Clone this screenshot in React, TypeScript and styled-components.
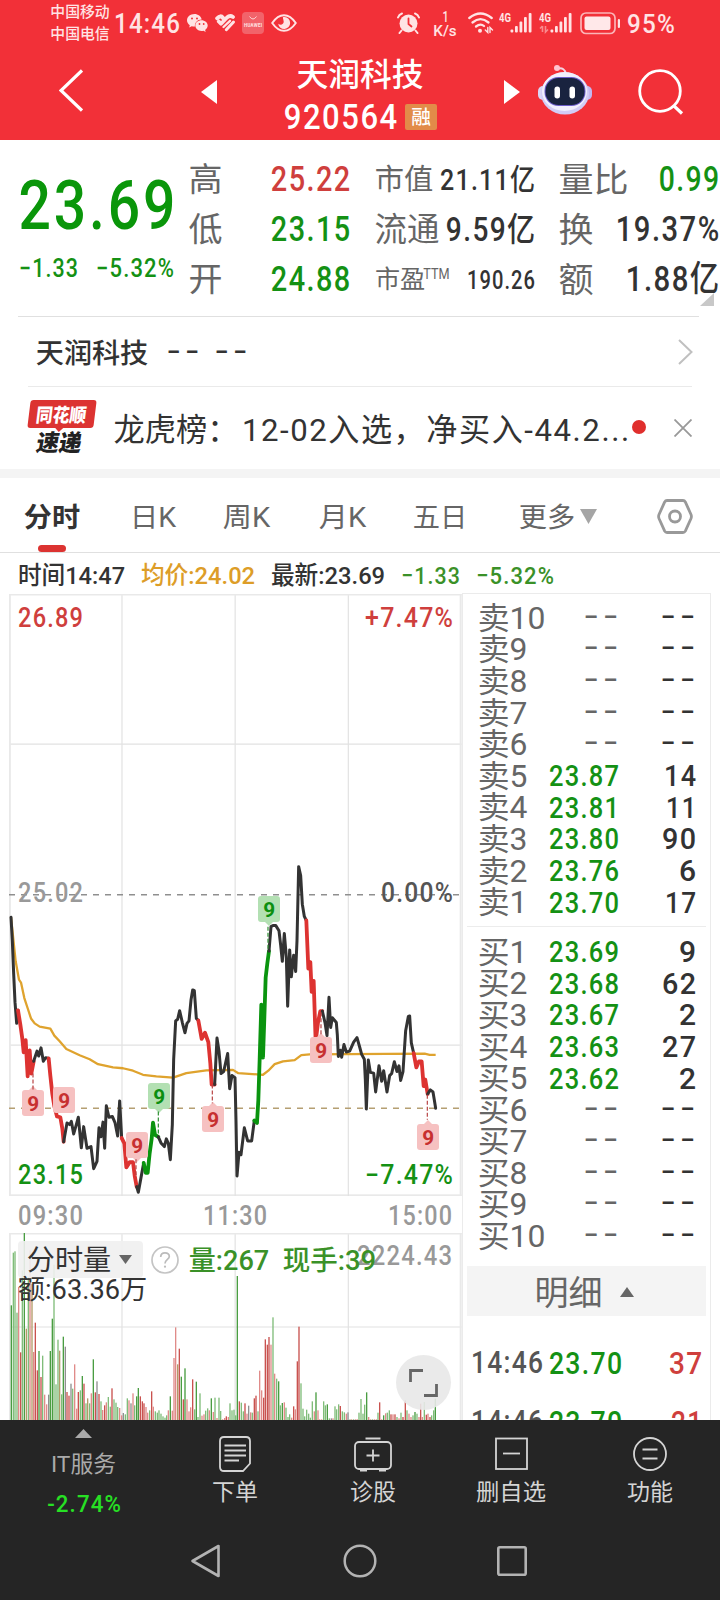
import React, { useLayoutEffect, useRef, useState } from "react";
import styled, { createGlobalStyle } from "styled-components";

const GlobalStyle = createGlobalStyle`
  * { box-sizing: border-box; }
  body { margin: 0; background: #fff; }
  svg { display: block; flex: none; }
`;

const RED = "#cf3f3d";
const GREEN = "#149114";
const INK = "#333";
const GREY = "#666";

/* ---------- text fitted to a fixed width ---------- */

const FitBox = styled.span<{ $w: number; $size: number; $weight: number; $color: string; $ls: number }>`
  display: block;
  flex: none;
  width: ${(p) => p.$w}px;
  height: ${(p) => Math.round(p.$size * 1.2)}px;
  line-height: ${(p) => Math.round(p.$size * 1.2)}px;
  font-family: Roboto, "Noto Sans CJK SC", sans-serif;
  font-size: ${(p) => p.$size}px;
  font-weight: ${(p) => p.$weight};
  letter-spacing: ${(p) => p.$ls}px;
  color: ${(p) => p.$color};
  white-space: nowrap;
`;

const FitInner = styled.span`
  display: inline-block;
  transform-origin: 0 50%;
  vertical-align: top;
`;

type FitProps = { w: number; size: number; weight?: number; color?: string; children: string };

function Fit({ w, size, weight = 400, color = INK, children }: FitProps) {
  const ref = useRef<HTMLSpanElement>(null);
  const [natural, setNatural] = useState(0);
  const numeric = /^[\d.+−-]/.test(children);
  const spacing = children === "--" ? size * 0.12 : numeric ? size * 0.05 : 0;
  useLayoutEffect(() => {
    const el = ref.current;
    if (el && !natural) setNatural(el.getBoundingClientRect().width - spacing);
  }, [natural, spacing]);
  const bearing = size * (numeric ? 0.035 : 0.045);
  const scale = natural ? (w + bearing * 2) / natural : 1;
  return (
    <FitBox $w={w} $size={size} $weight={weight} $color={color} $ls={spacing}>
      <FitInner ref={ref} style={natural ? { transform: `translate(${-bearing}px, 1px) scaleX(${scale})` } : undefined}>
        {children}
      </FitInner>
    </FitBox>
  );
}

/* ---------- header ---------- */

const Page = styled.div`
  width: 720px;
  height: 1600px;
  display: flex;
  flex-direction: column;
  overflow: hidden;
  background: #fff;
`;

const Header = styled.header`
  height: 140px;
  flex: none;
  background: #f23038;
`;

const StatusBar = styled.div`
  height: 46px;
  display: flex;
  align-items: center;
`;

const Slot = styled.div<{ $ml: number }>`
  margin-left: ${(p) => p.$ml}px;
  flex: none;
`;

const Carriers = styled.div`
  margin-left: 51px;
  height: 46px;
  display: flex;
  flex-direction: column;
  padding-top: 2px;
  gap: 4px;
`;

const Speed = styled.div`
  margin-left: 14px;
  display: flex;
  flex-direction: column;
  align-items: center;
  gap: 0;
  span + span { margin-top: -4px; }
`;

const NavBar = styled.div`
  height: 94px;
  display: flex;
  align-items: flex-start;
`;

const NavIcon = styled.div<{ $ml: number; $mt: number }>`
  margin-left: ${(p) => p.$ml}px;
  margin-top: ${(p) => p.$mt}px;
  flex: none;
`;

const TitleBlock = styled.div`
  margin-left: 68px;
  width: 153px;
  padding-top: 8px;
  flex: none;
`;

const TitleLine = styled.div`
  height: 42px;
  display: flex;
  align-items: center;
  padding-left: 13px;
`;

const CodeLine = styled(TitleLine)`
  padding-left: 0;
  gap: 9px;
  height: 41px;
`;

const MarginBadge = styled.span`
  width: 32px;
  height: 26px;
  border-radius: 2px;
  background: #e28b49;
  display: flex;
  align-items: center;
  justify-content: center;
`;

function WechatIcon() {
  return (
    <svg width="21" height="19" viewBox="0 0 21 19" fill="#ffe3e4">
      <path d="M7.500 0C3.300 0 0 2.800 0 6.300c0 2 1.100 3.700 2.800 4.900L2.200 13.500l2.500-1.300c.9.2 1.800.4 2.800.4h.5C7.300 8.600 10.400 5.500 14.700 5.400 14 2.300 11 0 7.500 0z" />
      <path d="M14.500 6.200c-3.500 0-6.200 2.400-6.200 5.400s2.700 5.400 6.200 5.400c.7 0 1.400-.1 2-.3l2.200 1.200-.6-1.900c1.500-1 2.600-2.600 2.600-4.400 0-3-2.800-5.400-6.200-5.400z" />
      <g fill="#f23038">
        <circle cx="5" cy="4.500" r="1" />
        <circle cx="10" cy="4.500" r="1" />
        <circle cx="12.500" cy="10" r=".9" />
        <circle cx="16.700" cy="10" r=".9" />
      </g>
    </svg>
  );
}

function HealthIcon() {
  return (
    <svg width="21" height="18" viewBox="0 0 21 18" fill="none" stroke="#ffe3e4" strokeWidth="4" strokeLinecap="round">
      <path d="M2.300 4.300Q5.500.8 8 4" strokeWidth="4.200" />
      <path d="M3.800 7.500 6 9.700 12 3.500Q15 .8 18 3" strokeWidth="3.800" strokeLinejoin="round" />
      <path d="M8.500 13 15 6.800" strokeWidth="2.300" />
      <path d="M11.300 15.700 18.500 8" strokeWidth="3" />
    </svg>
  );
}

function StoreIcon() {
  return (
    <svg width="22" height="22" viewBox="0 0 22 22">
      <rect width="22" height="22" rx="4" fill="#f2636a" />
      <path d="M7.500 4.500q3.500 5 7 0" fill="none" stroke="#ffd5d6" strokeWidth="1" />
      <text x="11" y="14.500" textAnchor="middle" fontSize="4.500" fontWeight="700" fontFamily="Roboto" fill="#ffe3e4" textLength="18">HUAWEI</text>
    </svg>
  );
}

function EyeIcon() {
  return (
    <svg width="26" height="18" viewBox="0 0 26 18">
      <path d="M1.200 9Q6.500 1.200 13 1.200T24.800 9Q19.500 16.800 13 16.800T1.200 9z" fill="none" stroke="#ffe3e4" strokeWidth="1.900" />
      <path d="M13.500 3a6 6 0 1 1-6.300 6.800c2.500 1.800 5.500.6 5.500-2 0-1.600-.8-3-.8-4.600.5-.2 1-.2 1.600-.2z" fill="#ffe3e4" />
    </svg>
  );
}

function AlarmIcon() {
  return (
    <svg width="23" height="22" viewBox="0 0 23 22">
      <circle cx="11.500" cy="11.500" r="9" fill="#ffe3e4" />
      <path d="M11.500 6.500v5.500l3 2.500" fill="none" stroke="#f23038" strokeWidth="1.800" strokeLinecap="round" />
      <path d="M1 5.500Q2 2.500 5 1.500M22 5.500Q21 2.500 18 1.500M4.500 18.500 2.500 21M18.500 18.500l2 2.500" stroke="#ffe3e4" strokeWidth="2" fill="none" strokeLinecap="round" />
    </svg>
  );
}

function WifiIcon() {
  return (
    <svg width="26" height="22" viewBox="0 0 26 22" fill="none" stroke="#ffe3e4" strokeWidth="2.300" strokeLinecap="round">
      <path d="M1.300 6Q12.500-3 23.700 6" />
      <path d="M4.500 10.500Q12.500 3.700 20.500 10.500" />
      <path d="M8 14.500Q12.500 11 16 14" />
      <circle cx="12" cy="18.700" r="2" fill="#ffe3e4" stroke="none" />
      <path d="M19.800 15.500v5l-2.500-2.500M22 20.500v-5l2.500 2.500" strokeWidth="1.400" />
    </svg>
  );
}

function SignalIcon({ data }: { data?: boolean }) {
  return (
    <svg width="34" height="22" viewBox="0 0 34 22" fill="#ffe3e4">
      <text x="0" y="9.500" fontSize="12" fontWeight="700" fontFamily="Roboto" textLength="12" lengthAdjust="spacingAndGlyphs">4G</text>
      {data && <path d="M3.500 14v6M1 16.500 3.500 14M6.500 14v6L9 17.500" stroke="#f98a8e" strokeWidth="1.600" fill="none" />}
      <rect x="11.500" y="17.500" width="2.800" height="3" rx="1" />
      <rect x="16" y="14" width="2.800" height="6.500" rx="1" />
      <rect x="20.500" y="9.500" width="2.800" height="11" rx="1" />
      <rect x="25" y="5" width="2.800" height="15.500" rx="1" />
      <rect x="29.700" y="1" width="2.800" height="19.500" rx="1" />
    </svg>
  );
}

function BatteryIcon() {
  return (
    <svg width="41" height="23" viewBox="0 0 41 23">
      <rect x="1" y="1" width="34" height="20.500" rx="5" fill="none" stroke="#fbb4b7" strokeWidth="1.700" />
      <rect x="4.500" y="4.500" width="26" height="13.500" rx="2" fill="#ffe8e9" />
      <rect x="37.800" y="7" width="2.200" height="9" rx="1.100" fill="#ffe3e4" />
    </svg>
  );
}

function RobotIcon() {
  return (
    <svg width="54" height="52" viewBox="0 0 54 52">
      <path d="M20 4.500q7-1 7.500 5" stroke="#f3d3e0" strokeWidth="2" fill="none" />
      <circle cx="19" cy="4" r="3" fill="#ffc4d0" />
      <rect x="0" y="22" width="10" height="14" rx="5" fill="#d9d6f7" />
      <rect x="44" y="22" width="10" height="14" rx="5" fill="#c3b7ef" />
      <ellipse cx="27" cy="29.500" rx="24" ry="21" fill="#d2ccf6" />
      <ellipse cx="26.500" cy="27.500" rx="22.500" ry="19.500" fill="#f1effd" />
      <rect x="6.500" y="13" width="41" height="29" rx="14" fill="#6b5cc9" />
      <rect x="7.500" y="14" width="39" height="27" rx="13" fill="#19233f" />
      <rect x="16.500" y="22.500" width="5.500" height="12" rx="2.700" fill="#fff" />
      <rect x="31.500" y="22.500" width="5.500" height="12" rx="2.700" fill="#fff" />
    </svg>
  );
}

function TopHeader() {
  const pale = "#ffe3e4";
  return (
    <Header>
      <StatusBar>
        <Carriers>
          <Fit w={58} size={15} weight={500} color={pale}>中国移动</Fit>
          <Fit w={58} size={15} weight={500} color={pale}>中国电信</Fit>
        </Carriers>
        <Slot $ml={6}><Fit w={64} size={27} weight={500} color={pale}>14:46</Fit></Slot>
        <Slot $ml={8}><WechatIcon /></Slot>
        <Slot $ml={7}><HealthIcon /></Slot>
        <Slot $ml={6}><StoreIcon /></Slot>
        <Slot $ml={7}><EyeIcon /></Slot>
        <Slot $ml={100}><AlarmIcon /></Slot>
        <Speed>
          <Fit w={5} size={15} weight={500} color={pale}>1</Fit>
          <Fit w={22} size={15} weight={500} color={pale}>K/s</Fit>
        </Speed>
        <Slot $ml={12}><WifiIcon /></Slot>
        <Slot $ml={5}><SignalIcon /></Slot>
        <Slot $ml={6}><SignalIcon data /></Slot>
        <Slot $ml={7}><BatteryIcon /></Slot>
        <Slot $ml={7}><Fit w={46} size={26} weight={500} color={pale}>95%</Fit></Slot>
      </StatusBar>
      <NavBar>
        <NavIcon $ml={59} $mt={23}>
          <svg width="24" height="43" viewBox="0 0 24 43"><path d="M23 1.500 2 21.500 23 41.500" fill="none" stroke="#fff" strokeWidth="3.200" /></svg>
        </NavIcon>
        <NavIcon $ml={118} $mt={34}>
          <svg width="16" height="24" viewBox="0 0 16 24"><path d="M16 0v24L0 12z" fill="#fff" /></svg>
        </NavIcon>
        <TitleBlock>
          <TitleLine><Fit w={124} size={31.500} weight={500} color="#fff">天润科技</Fit></TitleLine>
          <CodeLine>
            <Fit w={111} size={35} weight={500} color="#fff">920564</Fit>
            <MarginBadge><Fit w={18} size={19} weight={500} color="#fff">融</Fit></MarginBadge>
          </CodeLine>
        </TitleBlock>
        <NavIcon $ml={66} $mt={34}>
          <svg width="16" height="24" viewBox="0 0 16 24"><path d="M0 0v24l16-12z" fill="#fff" /></svg>
        </NavIcon>
        <NavIcon $ml={18} $mt={18}><RobotIcon /></NavIcon>
        <NavIcon $ml={46} $mt={23}>
          <svg width="46" height="46" viewBox="0 0 46 46" fill="none" stroke="#fff" strokeWidth="2.800"><circle cx="22" cy="22" r="20.300" /><path d="M35.500 36.500 44 44.500" strokeWidth="3.200" /></svg>
        </NavIcon>
      </NavBar>
    </Header>
  );
}

/* ---------- quote summary ---------- */

const Quote = styled.section`
  height: 176px;
  flex: none;
  display: flex;
  padding-top: 14px;
  position: relative;
`;

const PriceBlock = styled.div`
  width: 190px;
  padding: 9px 0 0 21px;
  flex: none;
`;

const ChangeLine = styled.div`
  display: flex;
  gap: 20px;
  margin-top: 6px;
  margin-left: -1px;
`;

const StatColumn = styled.div<{ $w: number; $mr: number }>`
  width: ${(p) => p.$w}px;
  margin-right: ${(p) => p.$mr}px;
  flex: none;
`;

const StatRow = styled.div`
  height: 50px;
  display: flex;
  align-items: center;
  justify-content: space-between;
`;

const PeLabel = styled.div`
  display: flex;
  align-items: flex-start;
`;

const Corner = styled.svg`
  position: absolute;
  left: 700px;
  top: 153px;
`;

const Divider = styled.div<{ $l: number; $r: number; $c?: string }>`
  height: 1px;
  flex: none;
  margin: 0 ${(p) => p.$r}px 0 ${(p) => p.$l}px;
  background: ${(p) => p.$c || "#e0e0e0"};
`;

function QuoteSummary() {
  return (
    <Quote>
      <PriceBlock>
        <Fit w={152} size={69} weight={500} color="#0a960a">23.69</Fit>
        <ChangeLine>
          <Fit w={57} size={25.500} weight={500} color={GREEN}>−1.33</Fit>
          <Fit w={76} size={25.500} weight={500} color={GREEN}>−5.32%</Fit>
        </ChangeLine>
      </PriceBlock>
      <StatColumn $w={159} $mr={27}>
        <StatRow><Fit w={31} size={33.500} color={GREY}>高</Fit><Fit w={77} size={35} weight={500} color={RED}>25.22</Fit></StatRow>
        <StatRow><Fit w={31} size={33.500} color={GREY}>低</Fit><Fit w={77} size={35} weight={500} color={GREEN}>23.15</Fit></StatRow>
        <StatRow><Fit w={31} size={33.500} color={GREY}>开</Fit><Fit w={77} size={35} weight={500} color={GREEN}>24.88</Fit></StatRow>
      </StatColumn>
      <StatColumn $w={158} $mr={26}>
        <StatRow><Fit w={56} size={29} color={GREY}>市值</Fit><Fit w={93} size={29.500} weight={500}>21.11亿</Fit></StatRow>
        <StatRow><Fit w={62} size={32.500} color={GREY}>流通</Fit><Fit w={87} size={33.500} weight={500}>9.59亿</Fit></StatRow>
        <StatRow>
          <PeLabel><Fit w={48} size={25} color={GREY}>市盈</Fit><Fit w={25} size={15} color={GREY}>TTM</Fit></PeLabel>
          <Fit w={66} size={26} weight={500}>190.26</Fit>
        </StatRow>
      </StatColumn>
      <StatColumn $w={158} $mr={0}>
        <StatRow><Fit w={67} size={34} color={GREY}>量比</Fit><Fit w={58} size={35} weight={500} color={GREEN}>0.99</Fit></StatRow>
        <StatRow><Fit w={32} size={34} color={GREY}>换</Fit><Fit w={101} size={35} weight={500}>19.37%</Fit></StatRow>
        <StatRow><Fit w={32} size={34} color={GREY}>额</Fit><Fit w={91} size={35} weight={500}>1.88亿</Fit></StatRow>
      </StatColumn>
      <Corner width="14" height="13" viewBox="0 0 14 13"><path d="M14 0v13H0z" fill="#c8c8c8" /></Corner>
    </Quote>
  );
}

/* ---------- company and news rows ---------- */

const CompanyRow = styled.div`
  height: 69px;
  flex: none;
  display: flex;
  align-items: center;
  padding: 1px 27px 0 37px;
`;

const Blank = styled.div<{ $ml: number }>`
  margin-left: ${(p) => p.$ml}px;
  padding-bottom: 4px;
`;

const Push = styled.div`
  margin-left: auto;
`;

const NewsRow = styled.div`
  height: 82px;
  flex: none;
  display: flex;
  align-items: center;
  padding: 0 28px 0 29px;
`;

const Headline = styled.div`
  padding-top: 2px;
  display: flex;
  gap: 6px;
`;

const NewsLogo = styled.div`
  width: 66px;
  height: 56px;
  margin-right: 20px;
  flex: none;
`;

const LogoTop = styled.div`
  height: 28px;
  display: flex;
  justify-content: center;
  align-items: center;
  background: #dc3331;
  border-radius: 3px;
  transform: skewX(-7deg);
  position: relative;
  &::after {
    content: "";
    position: absolute;
    left: 27px;
    top: 27px;
    border: 5px solid transparent;
    border-top-color: #dc3331;
  }
`;

const LogoBottom = styled.div`
  height: 26px;
  display: flex;
  justify-content: center;
  align-items: center;
  padding-top: 4px;
  transform: skewX(-10deg);
`;

const RedDot = styled.span`
  width: 14px;
  height: 14px;
  border-radius: 50%;
  background: #e02f2d;
  margin-left: 4px;
  margin-bottom: 3px;
`;

const Band = styled.div`
  height: 9px;
  flex: none;
  background: #f4f4f4;
`;

/* ---------- tabs ---------- */

const Tabs = styled.nav`
  height: 74px;
  flex: none;
  display: flex;
  align-items: center;
  padding: 3px 0 0 25px;
`;

const Tab = styled.div<{ $mr: number; $active?: boolean }>`
  height: 71px;
  margin-right: ${(p) => p.$mr}px;
  display: flex;
  align-items: center;
  gap: 6px;
  position: relative;
  &::after {
    content: "";
    display: ${(p) => (p.$active ? "block" : "none")};
    position: absolute;
    left: 13px;
    bottom: 0;
    width: 28px;
    height: 7px;
    border-radius: 4px;
    background: #dc3331;
  }
`;

const InfoLine = styled.div`
  height: 40px;
  flex: none;
  display: flex;
  align-items: center;
  padding: 3px 0 0 19px;
  gap: 18px;
`;

/* ---------- charts ---------- */

const Main = styled.main`
  height: 827px;
  flex: none;
  display: flex;
  overflow: hidden;
`;

const ChartColumn = styled.div`
  width: 462px;
  flex: none;
  padding: 1px 0 0 9.330px;
`;

const PlotBox = styled.div<{ $h: number }>`
  position: relative;
  width: 452.670px;
  height: ${(p) => p.$h}px;
`;

const Overlay = styled.div<{ $x: number; $y: number }>`
  position: absolute;
  left: ${(p) => p.$x}px;
  top: ${(p) => p.$y}px;
`;

const TimeAxis = styled.div`
  height: 37px;
  padding: 1px 11px 0 9.670px;
  display: flex;
  align-items: center;
  justify-content: space-between;
`;

const Marker = styled.div<{ $x: number; $y: number; $buy?: boolean; $tip?: "up" | "down" }>`
  position: absolute;
  left: ${(p) => p.$x}px;
  top: ${(p) => p.$y}px;
  width: 22px;
  height: 26px;
  border-radius: 3px;
  background: ${(p) => (p.$buy ? "#b3e0b3" : "#f6c1c1")};
  display: flex;
  align-items: center;
  justify-content: center;
  &::after {
    content: "";
    display: ${(p) => (p.$tip ? "block" : "none")};
    position: absolute;
    left: 6px;
    ${(p) => (p.$tip === "up" ? "top: -9px;" : "bottom: -9px;")}
    border: 5px solid transparent;
    ${(p) => (p.$tip === "up" ? "border-bottom-color" : "border-top-color")}: ${(p) => (p.$buy ? "#b3e0b3" : "#f6c1c1")};
  }
`;

/* Plot units: 3 per pixel across, 2.45 per pixel down. */
const AVERAGE =
  "34,802 48,910 58,955 64,962 74,1000 84,1025 94,1050 105,1062 120,1070 152,1075 164,1092 180,1106 200,1125 240,1140 270,1150 295,1162 340,1170 370,1172 400,1178 430,1188 470,1192 520,1195 560,1184 620,1177 700,1176 716,1184 790,1188 806,1178 825,1162 850,1155 885,1152 905,1140 930,1138 1275,1136 1290,1139 1308,1139";

const SEGMENTS: [string, string][] = [
  ["k", "34,802 38,860 42,940 46,1010 51,1062 55,1030"],
  ["r", "55,1030 62,1065 68,1100 72,1133 78,1103 84,1192 90,1128 95,1185 102,1155"],
  ["k", "102,1155 112,1130 117,1142 124,1122 131,1155 138,1146 147,1148"],
  ["r", "147,1148 152,1190 158,1235 164,1265 172,1290 182,1292 188,1320 192,1352"],
  ["k", "192,1352 202,1306 210,1310 215,1302 222,1333 230,1310 236,1292 245,1367 252,1315 262,1368 274,1364 282,1418 292,1400 298,1318 304,1340 310,1304 315,1368 320,1264 328,1292 338,1290 346,1305 354,1338 360,1252 366,1343"],
  ["r", "366,1343 374,1356 380,1415 390,1402 400,1402 405,1435 411,1462"],
  ["k", "411,1462 416,1476 424,1440 432,1404"],
  ["g", "432,1404 438,1428 444,1428 450,1380 456,1345 460,1305 466,1335 476,1340"],
  ["k", "476,1340 484,1355 494,1364 500,1345 506,1356 512,1396 518,1310 522,1150 528,1056 534,1052 540,1031 548,1060 556,1085 562,1062 568,1056 574,1005 579,980 584,982 590,1050 596,1055"],
  ["r", "596,1055 606,1100 616,1085 626,1108 632,1160 636,1212 645,1212"],
  ["k", "645,1212 652,1098 658,1130 664,1185 672,1180 684,1136 690,1222 697,1190 706,1195 709,1300 712,1436 718,1378 724,1384 734,1318 744,1350 756,1350 764,1300"],
  ["g", "764,1300 772,1306 776,1250 780,1150 785,1016 790,1146 794,1050 798,950 803,915 808,885"],
  ["k", "808,885 814,825 820,822 828,822 838,835 843,870 848,910 854,842 860,900 864,1020 870,882 875,948 882,895 888,935 892,860 897,678 903,700 908,770 914,800 920,810"],
  ["r", "920,810 926,928 932,912 936,985 942,958 948,1107 955,1060 962,1032 968,1032"],
  ["k", "968,1032 976,1060 982,1092 988,998 993,1072 998,1048 1010,1060 1013,1090 1016,1143 1022,1128 1026,1145 1033,1114 1040,1132 1050,1130 1062,1108 1072,1097 1080,1120 1086,1138 1094,1150 1097,1200 1100,1272 1106,1152 1112,1182 1122,1184 1128,1230 1138,1166 1146,1204 1152,1178 1162,1230 1170,1190 1176,1185 1184,1156 1192,1180 1198,1166 1203,1202 1210,1180 1218,1080 1226,1045 1230,1044 1235,1110 1242,1135"],
  ["r", "1242,1135 1250,1170 1258,1155 1266,1155 1272,1216 1277,1200 1284,1235"],
  ["k", "1284,1235 1292,1225 1300,1230 1304,1250 1308,1270"],
];

const LINE_COLORS: Record<string, string> = { k: "#333", r: "#dd3331", g: "#0a940f" };

const MARKERS: { x: number; y: number; buy?: boolean; tip?: "up" | "down" }[] = [
  { x: 22.500, y: 1090, tip: "up" },
  { x: 53, y: 1087 },
  { x: 126, y: 1132, tip: "down" },
  { x: 148, y: 1083, buy: true, tip: "down" },
  { x: 202, y: 1106, tip: "up" },
  { x: 258, y: 896, buy: true, tip: "down" },
  { x: 310, y: 1037, tip: "up" },
  { x: 417, y: 1124, tip: "up" },
];

const STEMS: [number, number, number, string][] = [
  [100, 1185, 1225, "r"],
  [409, 1395, 1440, "r"],
  [476, 1278, 1332, "g"],
  [638, 1212, 1258, "r"],
  [805, 825, 885, "g"],
  [964, 1035, 1092, "r"],
  [1283, 1237, 1298, "r"],
];

function Gridlines({ top, bottom, rows }: { top: number; bottom: number; rows: number[] }) {
  return (
    <g stroke="#e2e2e2" strokeWidth="1.200" fill="none">
      {[367, 706.500, 1046].map((x) => (
        <line key={x} x1={x} x2={x} y1={top} y2={bottom} vectorEffect="non-scaling-stroke" />
      ))}
      {rows.map((y) => (
        <line key={y} x1={28} x2={1386} y1={y} y2={y} vectorEffect="non-scaling-stroke" />
      ))}
      <line x1={30.500} x2={30.500} y1={top} y2={bottom} vectorEffect="non-scaling-stroke" stroke="#e9e9e9" strokeWidth="2" />
      <line x1={1383} x2={1383} y1={top} y2={bottom} vectorEffect="non-scaling-stroke" stroke="#e9e9e9" strokeWidth="2" />
      <line x1={28} x2={1386} y1={top + 2} y2={top + 2} vectorEffect="non-scaling-stroke" stroke="#e9e9e9" strokeWidth="1.600" />
    </g>
  );
}

function PriceChart() {
  return (
    <PlotBox $h={602}>
      <svg width="452.670" height="602" viewBox="28 10 1358 1475" preserveAspectRatio="none" fill="none">
        <Gridlines top={10} bottom={1485} rows={[378, 1115.500, 1483]} />
        <line x1="28" x2="1380" y1="747" y2="747" stroke="#8f8f8f" strokeWidth="1.600" strokeDasharray="6 6" vectorEffect="non-scaling-stroke" />
        <line x1="28" x2="1380" y1="1270" y2="1270" stroke="#b59f72" strokeWidth="1.600" strokeDasharray="6 6" vectorEffect="non-scaling-stroke" />
        <polyline points={AVERAGE} stroke="#dfa32e" strokeWidth="2.300" strokeLinejoin="round" vectorEffect="non-scaling-stroke" />
        {SEGMENTS.map(([tone, points], i) => (
          <polyline key={i} points={points} stroke={LINE_COLORS[tone]} strokeWidth={tone === "k" ? 3 : 3.800} strokeLinejoin="round" strokeLinecap="round" vectorEffect="non-scaling-stroke" />
        ))}
      </svg>
      {MARKERS.map((m) => (
        <Marker key={m.x} $x={m.x - 9.330} $y={m.y - 594} $buy={m.buy} $tip={m.tip}>
          <Fit w={10.500} size={20} weight={700} color={m.buy ? "#0b8f10" : "#c73030"}>9</Fit>
        </Marker>
      ))}
      <Overlay $x={0} $y={0}>
        <svg width="452.670" height="602" viewBox="28 10 1358 1475" preserveAspectRatio="none" fill="none">
          {STEMS.map(([x, y1, y2, tone]) => (
            <line key={x} x1={x} x2={x} y1={y1} y2={y2} stroke={tone === "r" ? "#b84444" : "#2f8f33"} strokeWidth="1.200" strokeDasharray="4 2" vectorEffect="non-scaling-stroke" />
          ))}
        </svg>
      </Overlay>
      <Overlay $x={9.700} $y={7}><Fit w={63} size={27} weight={500} color={RED}>26.89</Fit></Overlay>
      <Overlay $x={356.700} $y={7}><Fit w={86} size={27} weight={500} color={RED}>+7.47%</Fit></Overlay>
      <Overlay $x={9.700} $y={282}><Fit w={63} size={27} weight={500} color="#999">25.02</Fit></Overlay>
      <Overlay $x={372.700} $y={282}><Fit w={70} size={27} weight={500} color="#555">0.00%</Fit></Overlay>
      <Overlay $x={9.700} $y={564}><Fit w={63} size={27} weight={500} color={GREEN}>23.15</Fit></Overlay>
      <Overlay $x={356.700} $y={564}><Fit w={86} size={27} weight={500} color={GREEN}>−7.47%</Fit></Overlay>
    </PlotBox>
  );
}

/* Each bar: x position, top edge, tone. */
const VOLUME =
  "35,255,G 41,97,g 46,93,g 52,277,g 57,200,r 63,396,R 68,150,g 74,38,G 80,325,b 86,170,g 91,90,r 97,190,b 102,395,r 107,307,R 113,450,R 118,392,G 124,470,R 129,406,g 135,523,r 141,552,r 147,523,k 152,392,G 158,295,G 163,133,g 169,492,g 175,358,g 180,391,b 186,522,g 191,349,G 197,379,k 202,515,R 208,526,R 214,490,k 219,505,g 225,432,r 231,565,r 236,515,R 242,510,g 248,467,G 253,490,R 259,549,g 264,534,b 270,549,g 275,519,r 281,417,G 287,516,R 292,483,k 298,521,R 304,543,g 309,569,r 315,555,R 320,546,r 326,530,g 332,559,g 337,504,R 343,537,g 349,547,g 354,560,g 360,563,r 366,585,r 371,578,k 377,582,g 383,534,g 388,540,r 394,549,k 400,519,r 405,555,g 411,528,G 416,503,G 422,528,R 428,543,R 433,549,R 439,560,r 444,577,r 450,570,g 456,513,R 461,559,r 467,573,g 473,577,g 478,570,g 484,580,g 490,588,g 496,592,g 501,585,g 506,570,r 512,528,G 518,571,r 523,413,r 528,321,r 534,432,b 539,385,R 545,469,G 551,537,R 556,444,G 562,537,r 568,573,r 573,561,r 579,477,R 585,567,g 590,484,G 595,590,g 601,519,g 607,586,r 613,582,r 618,571,g 624,564,g 629,570,r 635,534,G 641,575,r 646,532,g 652,593,r 658,532,g 663,572,g 669,597,r 675,593,r 680,588,R 686,590,r 691,549,g 697,570,g 703,568,g 708,585,g 713,167,G 719,543,R 725,547,g 731,573,g 736,549,R 742,580,r 747,556,k 753,576,r 758,577,g 764,534,R 769,526,R 775,573,g 780,451,r 786,510,r 792,532,R 797,357,R 803,373,R 808,350,R 814,373,r 820,291,g 825,460,r 831,475,g 837,483,G 842,555,g 848,548,G 854,546,r 859,562,g 865,590,g 870,582,g 876,592,r 882,558,R 887,567,r 893,423,R 898,319,R 904,489,g 910,565,g 915,588,g 921,568,g 927,580,g 932,592,g 938,543,g 944,573,r 949,516,G 955,570,r 960,597,r 966,597,r 972,543,g 977,555,g 983,552,G 989,594,g 995,594,k 1000,594,r 1006,558,g 1011,567,g 1017,552,g 1022,557,R 1028,573,g 1034,576,g 1040,580,r 1045,576,k 1051,597,g 1056,597,r 1062,597,g 1068,597,r 1073,597,r 1078,577,g 1084,536,g 1090,580,g 1095,553,g 1101,516,G 1107,590,r 1112,597,r 1118,597,g 1124,597,r 1130,597,r 1135,577,g 1140,546,R 1146,597,r 1152,585,G 1158,579,r 1163,577,g 1169,570,g 1174,582,R 1180,582,r 1186,582,R 1192,590,g 1198,594,r 1204,577,g 1210,590,R 1217,540,R 1222,570,g 1228,580,r 1234,590,r 1240,585,g 1246,575,G 1252,580,g 1258,590,r 1263,550,R 1268,590,r 1274,545,g 1280,583,R 1285,580,r 1291,590,R 1296,585,g 1302,570,g 1307,535,G";

const BAR_COLORS: Record<string, string> = { G: "#4a9d42", g: "#80bd7a", R: "#c9524f", r: "#e08b89", b: "#b39a68", k: "#909090" };

const VolumeTag = styled.div`
  width: 125px;
  height: 37px;
  border-radius: 4px;
  background: rgba(240, 240, 240, 0.9);
  display: flex;
  align-items: center;
  padding-left: 10px;
  gap: 9px;
`;

const VolumeLine = styled.div`
  display: flex;
  align-items: center;
`;

const Expand = styled.div`
  width: 55px;
  height: 55px;
  border-radius: 50%;
  background: rgba(232, 232, 232, 0.9);
  display: flex;
  align-items: center;
  justify-content: center;
`;

function VolumeChart() {
  return (
    <PlotBox $h={187}>
      <svg width="452.670" height="187" viewBox="28 38 1358 561" preserveAspectRatio="none">
        <Gridlines top={38} bottom={600} rows={[320]} />
        {VOLUME.split(" ").map((bar) => {
          const [x, y, tone] = bar.split(",");
          return <rect key={x} x={Number(x) - 2} y={y} width="4" height={600 - Number(y)} fill={BAR_COLORS[tone]} />;
        })}
      </svg>
      <Overlay $x={348.700} $y={6}><Fit w={93} size={27} weight={500} color="#999">2224.43</Fit></Overlay>
      <Overlay $x={8.700} $y={8}>
        <VolumeLine>
          <VolumeTag>
            <Fit w={82} size={28}>分时量</Fit>
            <svg width="13" height="9" viewBox="0 0 13 9"><path d="M0 0h13L6.500 9z" fill="#666" /></svg>
          </VolumeTag>
          <Slot $ml={8}>
            <svg width="28" height="28" viewBox="0 0 28 28">
              <circle cx="14" cy="14" r="13" fill="none" stroke="#c4c4c4" strokeWidth="1.700" />
              <path d="M9.700 11Q9.800 6.800 14 6.800T18.300 10.500C18.300 13.300 14 13.500 14 17.500" fill="none" stroke="#bbb" strokeWidth="1.700" />
              <circle cx="14" cy="20.700" r="1.100" fill="#bbb" />
            </svg>
          </Slot>
          <Slot $ml={11}><Fit w={78} size={27.500} weight={500} color="#3a9128">量:267</Fit></Slot>
          <Slot $ml={16}><Fit w={91} size={27.500} weight={500} color="#3a9128">现手:39</Fit></Slot>
        </VolumeLine>
      </Overlay>
      <Overlay $x={9.700} $y={40}><Fit w={127} size={27}>额:63.36万</Fit></Overlay>
      <Overlay $x={386.700} $y={122}>
        <Expand>
          <svg width="29" height="28" viewBox="0 0 29 28" fill="none" stroke="#666" strokeWidth="2.800"><path d="M1.500 13V1.500H14M15 26.500H27.500V15" /></svg>
        </Expand>
      </Overlay>
    </PlotBox>
  );
}

/* ---------- order book ---------- */

const Book = styled.aside`
  width: 249px;
  flex: none;
  border: 1px solid #ebebeb;
  border-bottom: 0;
  padding-top: 7.500px;
  height: 840px;
`;

const BookRow = styled.div`
  height: 31.600px;
  display: flex;
  align-items: center;
  padding: 0 15px 0 16px;
`;

const BookLabel = styled.div`
  width: 66px;
  flex: none;
`;

const BookCell = styled.div<{ $w: number; $empty?: boolean }>`
  width: ${(p) => p.$w}px;
  padding-bottom: ${(p) => (p.$empty ? 5 : 0)}px;
  padding-right: ${(p) => (p.$empty ? 1 : 0)}px;
  flex: none;
  display: flex;
  justify-content: flex-end;
`;

const DetailBar = styled.div`
  height: 50px;
  margin: 15px 4px 17px;
  background: #f4f4f4;
  display: flex;
  align-items: center;
  padding: 2px 0 0 69px;
  gap: 19px;
`;

const TradeRow = styled.div`
  height: 59px;
  display: flex;
  align-items: center;
  padding: 0 9px 2px 9px;
`;

type Level = [string, string?, string?];

const ASKS: Level[] = [
  ["卖10"], ["卖9"], ["卖8"], ["卖7"], ["卖6"],
  ["卖5", "23.87", "14"], ["卖4", "23.81", "11"], ["卖3", "23.80", "90"], ["卖2", "23.76", "6"], ["卖1", "23.70", "17"],
];
const BIDS: Level[] = [
  ["买1", "23.69", "9"], ["买2", "23.68", "62"], ["买3", "23.67", "2"], ["买4", "23.63", "27"], ["买5", "23.62", "2"],
  ["买6"], ["买7"], ["买8"], ["买9"], ["买10"],
];

const VOL_WIDTH: Record<string, number> = { "14": 30, "11": 28, "17": 29 };

function Dashes({ color }: { color: string }) {
  return <Fit w={32} size={28} weight={500} color={color}>--</Fit>;
}

function Levels({ items }: { items: Level[] }) {
  return (
    <>
      {items.map(([label, price, vol]) => (
        <BookRow key={label}>
          <BookLabel><Fit w={label.length > 2 ? 65 : 47} size={30.500} color={GREY}>{label}</Fit></BookLabel>
          <BookCell $w={73} $empty={!price}>
            {price ? <Fit w={68} size={30} weight={500} color={GREEN}>{price}</Fit> : <Dashes color={GREY} />}
          </BookCell>
          <BookCell $w={77} $empty={!vol}>
            {vol ? <Fit w={vol.length > 1 ? VOL_WIDTH[vol] || 32 : 15} size={30} weight={500}>{vol}</Fit> : <Dashes color={INK} />}
          </BookCell>
        </BookRow>
      ))}
    </>
  );
}

const BookGap = styled.div`
  height: 18px;
  display: flex;
  align-items: center;
  &::after {
    content: "";
    height: 1px;
    flex: 1;
    margin: 0 4px;
    background: #ececec;
  }
`;

function OrderBook() {
  return (
    <Book>
      <Levels items={ASKS} />
      <BookGap />
      <Levels items={BIDS} />
      <DetailBar>
        <Fit w={65} size={34} color={GREY}>明细</Fit>
        <svg width="14" height="10" viewBox="0 0 14 10"><path d="M0 10h14L7 0z" fill="#666" /></svg>
      </DetailBar>
      {["37", "21"].map((v) => (
        <TradeRow key={v}>
          <Fit w={70} size={31} weight={500} color="#555">14:46</Fit>
          <Slot $ml={8}><Fit w={71} size={32} weight={500} color={GREEN}>23.70</Fit></Slot>
          <Push><Fit w={v === "21" ? 29 : 31} size={32} weight={500} color={RED}>{v}</Fit></Push>
        </TradeRow>
      ))}
    </Book>
  );
}

/* ---------- bottom bars ---------- */

const Bottom = styled.footer`
  height: 180px;
  flex: none;
  background: #252525;
`;

const Toolbar = styled.div`
  height: 102px;
  display: flex;
`;

const IndexItem = styled.div`
  width: 167px;
  display: flex;
  flex-direction: column;
  align-items: center;
  padding-top: 9px;
  svg { margin-bottom: 12px; }
  span + span { margin-top: 13px; }
`;

const ToolItem = styled.div<{ $w: number }>`
  width: ${(p) => p.$w}px;
  display: flex;
  flex-direction: column;
  align-items: center;
  padding-top: 15.500px;
  gap: 6px;
`;

const SystemNav = styled.div`
  height: 78px;
  display: flex;
  align-items: center;
  padding: 0 0 0 190px;
`;

function BottomBars() {
  const pale = "#d4d4d4";
  return (
    <Bottom>
      <Toolbar>
        <IndexItem>
          <svg width="17" height="9" viewBox="0 0 17 9"><path d="M0 9h17L8.500 0z" fill="#aaa" /></svg>
          <Fit w={63} size={22.500} color="#aaa">IT服务</Fit>
          <Fit w={72} size={23} weight={500} color="#27e024">-2.74%</Fit>
        </IndexItem>
        <ToolItem $w={136}>
          <svg width="32" height="36" viewBox="0 0 32 36" fill="none" stroke={pale} strokeWidth="1.800">
            <path d="M5 1h22q4 0 4 4v22.500l-7 7.500H5q-4 0-4-4V5q0-4 4-4z" />
            <path d="M5.500 9.500h21.500M5.500 14.500h21.500M5.500 19.500h21.500M5.500 24.500H20" />
          </svg>
          <Fit w={44} size={22.500} color={pale}>下单</Fit>
        </ToolItem>
        <ToolItem $w={140}>
          <svg width="38" height="36" viewBox="0 0 38 36" fill="none" stroke={pale} strokeWidth="1.800">
            <rect x="1" y="6" width="36" height="27" rx="4" />
            <path d="M11.500 2.500h15M19 13.500v12M12.500 19.500h13M6 34.500h7M25 34.500h7" />
          </svg>
          <Fit w={44} size={22.500} color={pale}>诊股</Fit>
        </ToolItem>
        <ToolItem $w={136}>
          <svg width="33" height="36" viewBox="0 0 33 36" fill="none" stroke={pale} strokeWidth="1.800">
            <rect x="1" y="2.500" width="31" height="30.500" />
            <path d="M8 17.500h17" />
          </svg>
          <Fit w={68} size={22.500} color={pale}>删自选</Fit>
        </ToolItem>
        <ToolItem $w={141}>
          <svg width="34" height="36" viewBox="0 0 34 36" fill="none" stroke={pale} strokeWidth="1.800">
            <circle cx="17" cy="18" r="16" />
            <path d="M9.500 13.500h15M9.500 22.500h15" />
          </svg>
          <Fit w={44} size={22.500} color={pale}>功能</Fit>
        </ToolItem>
      </Toolbar>
      <SystemNav>
        <svg width="31" height="34" viewBox="0 0 31 34" fill="none" stroke="#b3b3b3" strokeWidth="2.600" strokeLinejoin="round"><path d="M28.500 2v30L2.500 17z" /></svg>
        <Slot $ml={122}>
          <svg width="34" height="34" viewBox="0 0 34 34" fill="none" stroke="#b3b3b3" strokeWidth="2.500"><circle cx="17" cy="17" r="15.300" /></svg>
        </Slot>
        <Slot $ml={120}>
          <svg width="30" height="30" viewBox="0 0 30 30" fill="none" stroke="#b3b3b3" strokeWidth="2.600"><rect x="1.300" y="1.300" width="27.400" height="27.400" rx="1.500" /></svg>
        </Slot>
      </SystemNav>
    </Bottom>
  );
}

export default function App() {
  return (
    <Page>
      <GlobalStyle />
      <TopHeader />
      <QuoteSummary />
      <Divider $l={18} $r={21} />
      <CompanyRow>
        <Fit w={110} size={27.500} weight={500}>天润科技</Fit>
        <Blank $ml={21}><Fit w={30} size={26} weight={500}>--</Fit></Blank>
        <Blank $ml={18}><Fit w={30} size={26} weight={500}>--</Fit></Blank>
        <Push>
          <svg width="15" height="26" viewBox="0 0 15 26" fill="none" stroke="#c0c0c0" strokeWidth="2"><path d="M1 1 13.500 13 1 25" /></svg>
        </Push>
      </CompanyRow>
      <Divider $l={28} $r={28} $c="#eaeaea" />
      <NewsRow>
        <NewsLogo>
          <LogoTop><Fit w={51} size={19} weight={900} color="#fff">同花顺</Fit></LogoTop>
          <LogoBottom><Fit w={48} size={23} weight={900} color="#222">速递</Fit></LogoBottom>
        </NewsLogo>
        <Headline>
          <Fit w={122} size={32}>龙虎榜：</Fit>
          <Fit w={385} size={32}>12-02入选，净买入-44.2...</Fit>
        </Headline>
        <RedDot />
        <Push>
          <svg width="18" height="18" viewBox="0 0 18 18" stroke="#999" strokeWidth="1.800"><path d="M.5.5l17 17M17.500.5l-17 17" /></svg>
        </Push>
      </NewsRow>
      <Band />
      <Tabs>
        <Tab $mr={52} $active><Fit w={54} size={27.500} weight={700}>分时</Fit></Tab>
        <Tab $mr={49}><Fit w={44} size={27.500} color={GREY}>日K</Fit></Tab>
        <Tab $mr={51}><Fit w={45} size={27.500} color={GREY}>周K</Fit></Tab>
        <Tab $mr={49}><Fit w={45} size={27.500} color={GREY}>月K</Fit></Tab>
        <Tab $mr={54}><Fit w={52} size={27.500} color={GREY}>五日</Fit></Tab>
        <Tab $mr={60}>
          <Fit w={54} size={27.500} color={GREY}>更多</Fit>
          <svg width="17" height="15" viewBox="0 0 17 15"><path d="M0 0h17L8.500 15z" fill="#a5a5a5" /></svg>
        </Tab>
        <svg width="36" height="35" viewBox="0 0 36 35" fill="none" stroke="#999" strokeWidth="2.800" strokeLinejoin="round">
          <path d="M10 1.500h16q1.500 0 2.300 1.400L34 15.500q.8 2 0 4l-5.700 12.600q-.8 1.400-2.300 1.400H10q-1.500 0-2.300-1.400L2 19.500q-.8-2 0-4L7.700 2.900Q8.500 1.500 10 1.500z" />
          <circle cx="18" cy="17.500" r="5.500" />
        </svg>
      </Tabs>
      <Divider $l={0} $r={0} />
      <InfoLine>
        <Fit w={105} size={24.500} weight={500}>时间14:47</Fit>
        <Fit w={112} size={24.500} weight={500} color="#dd9d28">均价:24.02</Fit>
        <Fit w={112} size={24.500} weight={500}>最新:23.69</Fit>
        <Fit w={57} size={24.500} weight={500} color="#3a9128">−1.33</Fit>
        <Fit w={76} size={24.500} weight={500} color="#3a9128">−5.32%</Fit>
      </InfoLine>
      <Main>
        <ChartColumn>
          <PriceChart />
          <TimeAxis>
            <Fit w={63} size={27} weight={500} color="#999">09:30</Fit>
            <Fit w={62} size={27} weight={500} color="#999">11:30</Fit>
            <Fit w={62} size={27} weight={500} color="#999">15:00</Fit>
          </TimeAxis>
          <VolumeChart />
        </ChartColumn>
        <OrderBook />
      </Main>
      <BottomBars />
    </Page>
  );
}
